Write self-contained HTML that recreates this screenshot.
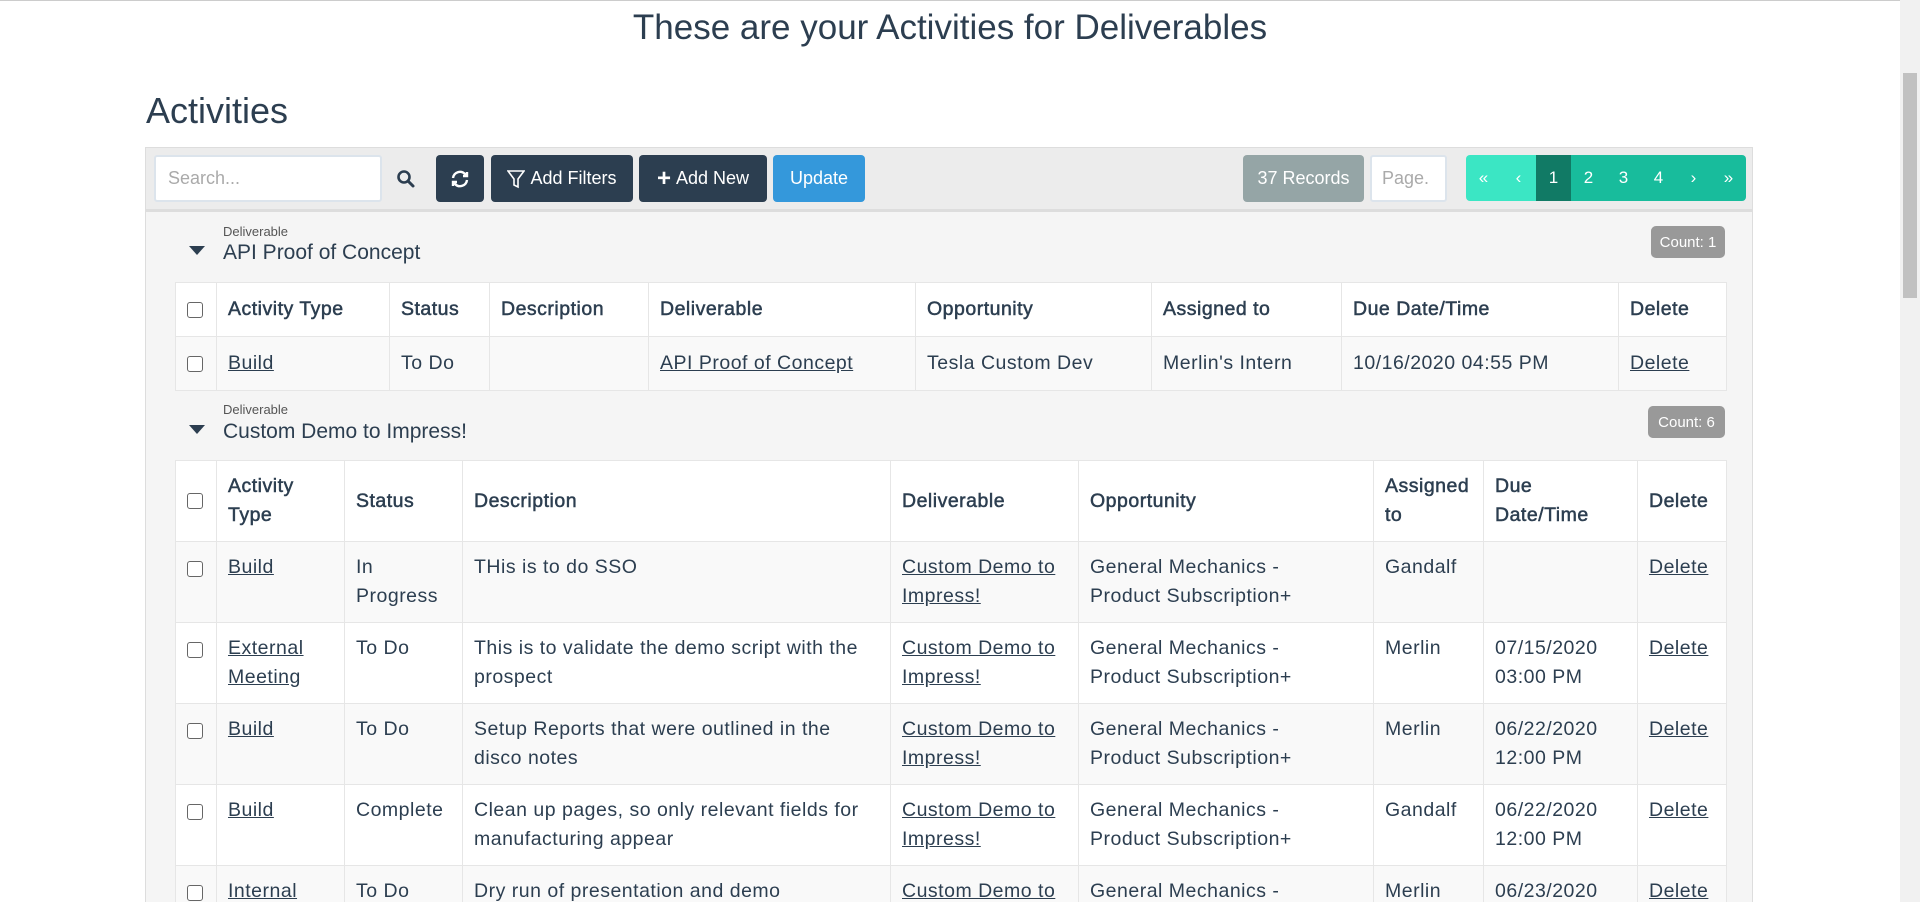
<!DOCTYPE html>
<html><head><meta charset="utf-8"><style>
*{box-sizing:border-box}
html,body{margin:0;padding:0;width:1920px;height:902px;overflow:hidden;background:#fff;font-family:"Liberation Sans",sans-serif;color:#2c3e50}
.topline{position:absolute;left:0;top:0;width:1900px;height:1px;background:#ccc}
.sb{position:absolute;right:0;top:0;width:20px;height:902px;background:#f1f1f1}
.sb div{position:absolute;left:3px;top:73px;width:14px;height:225px;background:#c1c1c1}
h1{position:absolute;left:0;width:1900px;top:8px;margin:0;text-align:center;font-weight:normal;font-size:35px}
h2{position:absolute;left:146px;top:90px;margin:0;font-weight:normal;font-size:36px}
.panel{position:absolute;left:145px;top:147px;width:1608px;height:755px;border:1px solid #ddd;border-bottom:none;background:#f5f5f5;overflow:hidden}
.tb{position:absolute;left:0;top:0;width:100%;height:64px;background:#ececec;border-bottom:3px solid #ddd}
.ab{position:absolute;top:7px;height:47px;border-radius:4px;color:#fff;font-size:18px;display:flex;align-items:center;justify-content:center}
.dk{background:#2c3e50}
.srch{position:absolute;left:8px;top:7px;width:228px;height:47px;border:2px solid #dce4ec;background:#fff;border-radius:3px;color:#aaa;font-size:18px;padding:11px 12px}
.pg{position:absolute;left:1320px;top:7px;height:46px;display:flex;border-radius:4px;overflow:hidden}
.pg span{width:35px;display:flex;align-items:center;justify-content:center;color:#fff;font-size:17px;background:#18bc9c}
.lbl{position:absolute;font-size:13px;color:#555}
.gt{position:absolute;font-size:21px}
.tri{position:absolute;width:0;height:0;border-left:8px solid transparent;border-right:8px solid transparent;border-top:9px solid #2c3e50}
.badge{position:absolute;background:#999;color:#fff;font-size:15px;border-radius:5px;display:flex;align-items:center;justify-content:center}
table{position:absolute;border-collapse:collapse;table-layout:fixed;font-size:19.5px;letter-spacing:0.5px}
td,th{border:1px solid #e6e6e6;padding:0 11px;vertical-align:middle;text-align:left;line-height:29px}
th{background:#fff;font-weight:normal;color:#2c3e50;-webkit-text-stroke:.5px #2c3e50}
td{vertical-align:top;padding-top:11px}
.t1 td{vertical-align:middle;padding-top:0}
tr.g td{background:#f9f9f9}
tr.w td{background:#fff}
a{color:#2c3e50;text-decoration:underline}
.cb{display:inline-block;width:16px;height:16px;border:1px solid #666;border-radius:3px;background:#fff;vertical-align:middle}
td:first-child,th:first-child{padding:0 0 0 11px}
td:first-child{padding-top:12px}
.t1 td:first-child{padding-top:0}
</style></head><body>
<div class="topline"></div>
<div class="sb"><div></div></div>
<h1>These are your Activities for Deliverables</h1>
<h2>Activities</h2>
<div class="panel">
 <div class="tb">
  <div class="srch">Search...</div>
  <svg style="position:absolute;left:250px;top:21px" width="20" height="20" viewBox="0 0 20 20"><circle cx="8" cy="8" r="5.5" fill="none" stroke="#2c3e50" stroke-width="2.6"/><path d="M12 12l5 5" stroke="#2c3e50" stroke-width="3" stroke-linecap="round"/></svg>
  <div class="ab dk" style="left:290px;width:48px"><svg width="20" height="20" viewBox="0 0 20 20" fill="none" stroke="#fff" stroke-width="2.4"><path d="M3 9a7 7 0 0 1 12-4l2 2M17 11a7 7 0 0 1-12 4l-2-2"/><path d="M17 3v4h-4M3 17v-4h4"/></svg></div>
  <div class="ab dk" style="left:345px;width:142px"><svg width="18" height="20" viewBox="0 0 18 20" fill="none" stroke="#fff" stroke-width="1.6"><path d="M1 2h16l-6 8v8l-4-2v-6z"/></svg>&nbsp;Add Filters</div>
  <div class="ab dk" style="left:493px;width:128px"><b style="font-size:24px">+</b>&nbsp;Add New</div>
  <div class="ab" style="left:627px;width:92px;background:#3498db">Update</div>
  <div class="ab" style="left:1097px;width:121px;background:#95a5a6">37 Records</div>
  <div class="srch" style="left:1224px;width:77px;padding:11px 10px">Page.</div>
  <div class="pg"><span style="background:#3be6c4">«</span><span style="background:#3be6c4">‹</span><span style="background:#117a65">1</span><span>2</span><span>3</span><span>4</span><span>›</span><span>»</span></div>
 </div>
 <div class="lbl" style="left:77px;top:76px">Deliverable</div>
 <div class="tri" style="left:43px;top:98px"></div>
 <div class="gt" style="left:77px;top:93px">API Proof of Concept</div>
 <div class="badge" style="left:1505px;top:78px;width:74px;height:32px">Count: 1</div>
 <table class="t1" style="left:29px;top:134px;width:1551px">
  <colgroup><col style="width:41px"><col style="width:173px"><col style="width:100px"><col style="width:159px"><col style="width:267px"><col style="width:236px"><col style="width:190px"><col style="width:277px"><col style="width:108px"></colgroup>
  <tr class="w" style="height:54px"><th><span class="cb"></span></th><th>Activity Type</th><th>Status</th><th>Description</th><th>Deliverable</th><th>Opportunity</th><th>Assigned to</th><th>Due Date/Time</th><th>Delete</th></tr>
  <tr class="g" style="height:54px"><td><span class="cb"></span></td><td><a>Build</a></td><td>To Do</td><td></td><td><a>API Proof of Concept</a></td><td>Tesla Custom Dev</td><td>Merlin's Intern</td><td>10/16/2020 04:55 PM</td><td><a>Delete</a></td></tr>
 </table>
 <div class="lbl" style="left:77px;top:254px">Deliverable</div>
 <div class="tri" style="left:43px;top:277px"></div>
 <div class="gt" style="left:77px;top:272px">Custom Demo to Impress!</div>
 <div class="badge" style="left:1502px;top:258px;width:77px;height:32px">Count: 6</div>
 <table style="left:29px;top:312px;width:1551px">
  <colgroup><col style="width:41px"><col style="width:128px"><col style="width:118px"><col style="width:428px"><col style="width:188px"><col style="width:295px"><col style="width:110px"><col style="width:154px"><col style="width:89px"></colgroup>
  <tr class="w" style="height:81px"><th><span class="cb"></span></th><th>Activity Type</th><th>Status</th><th>Description</th><th>Deliverable</th><th>Opportunity</th><th>Assigned to</th><th>Due Date/Time</th><th>Delete</th></tr>
  <tr class="g" style="height:81px"><td><span class="cb"></span></td><td><a>Build</a></td><td>In Progress</td><td>THis is to do SSO</td><td><a>Custom Demo to Impress!</a></td><td>General Mechanics -<br>Product Subscription+</td><td>Gandalf</td><td></td><td><a>Delete</a></td></tr>
  <tr class="w" style="height:81px"><td><span class="cb"></span></td><td><a>External Meeting</a></td><td>To Do</td><td>This is to validate the demo script with the prospect</td><td><a>Custom Demo to Impress!</a></td><td>General Mechanics -<br>Product Subscription+</td><td>Merlin</td><td>07/15/2020 03:00 PM</td><td><a>Delete</a></td></tr>
  <tr class="g" style="height:81px"><td><span class="cb"></span></td><td><a>Build</a></td><td>To Do</td><td>Setup Reports that were outlined in the disco notes</td><td><a>Custom Demo to Impress!</a></td><td>General Mechanics -<br>Product Subscription+</td><td>Merlin</td><td>06/22/2020 12:00 PM</td><td><a>Delete</a></td></tr>
  <tr class="w" style="height:81px"><td><span class="cb"></span></td><td><a>Build</a></td><td>Complete</td><td>Clean up pages, so only relevant fields for manufacturing appear</td><td><a>Custom Demo to Impress!</a></td><td>General Mechanics -<br>Product Subscription+</td><td>Gandalf</td><td>06/22/2020 12:00 PM</td><td><a>Delete</a></td></tr>
  <tr class="g" style="height:81px"><td><span class="cb"></span></td><td><a>Internal Meeting</a></td><td>To Do</td><td>Dry run of presentation and demo</td><td><a>Custom Demo to Impress!</a></td><td>General Mechanics -<br>Product Subscription+</td><td>Merlin</td><td>06/23/2020 12:00 PM</td><td><a>Delete</a></td></tr>
 </table>
</div>
</body></html>
